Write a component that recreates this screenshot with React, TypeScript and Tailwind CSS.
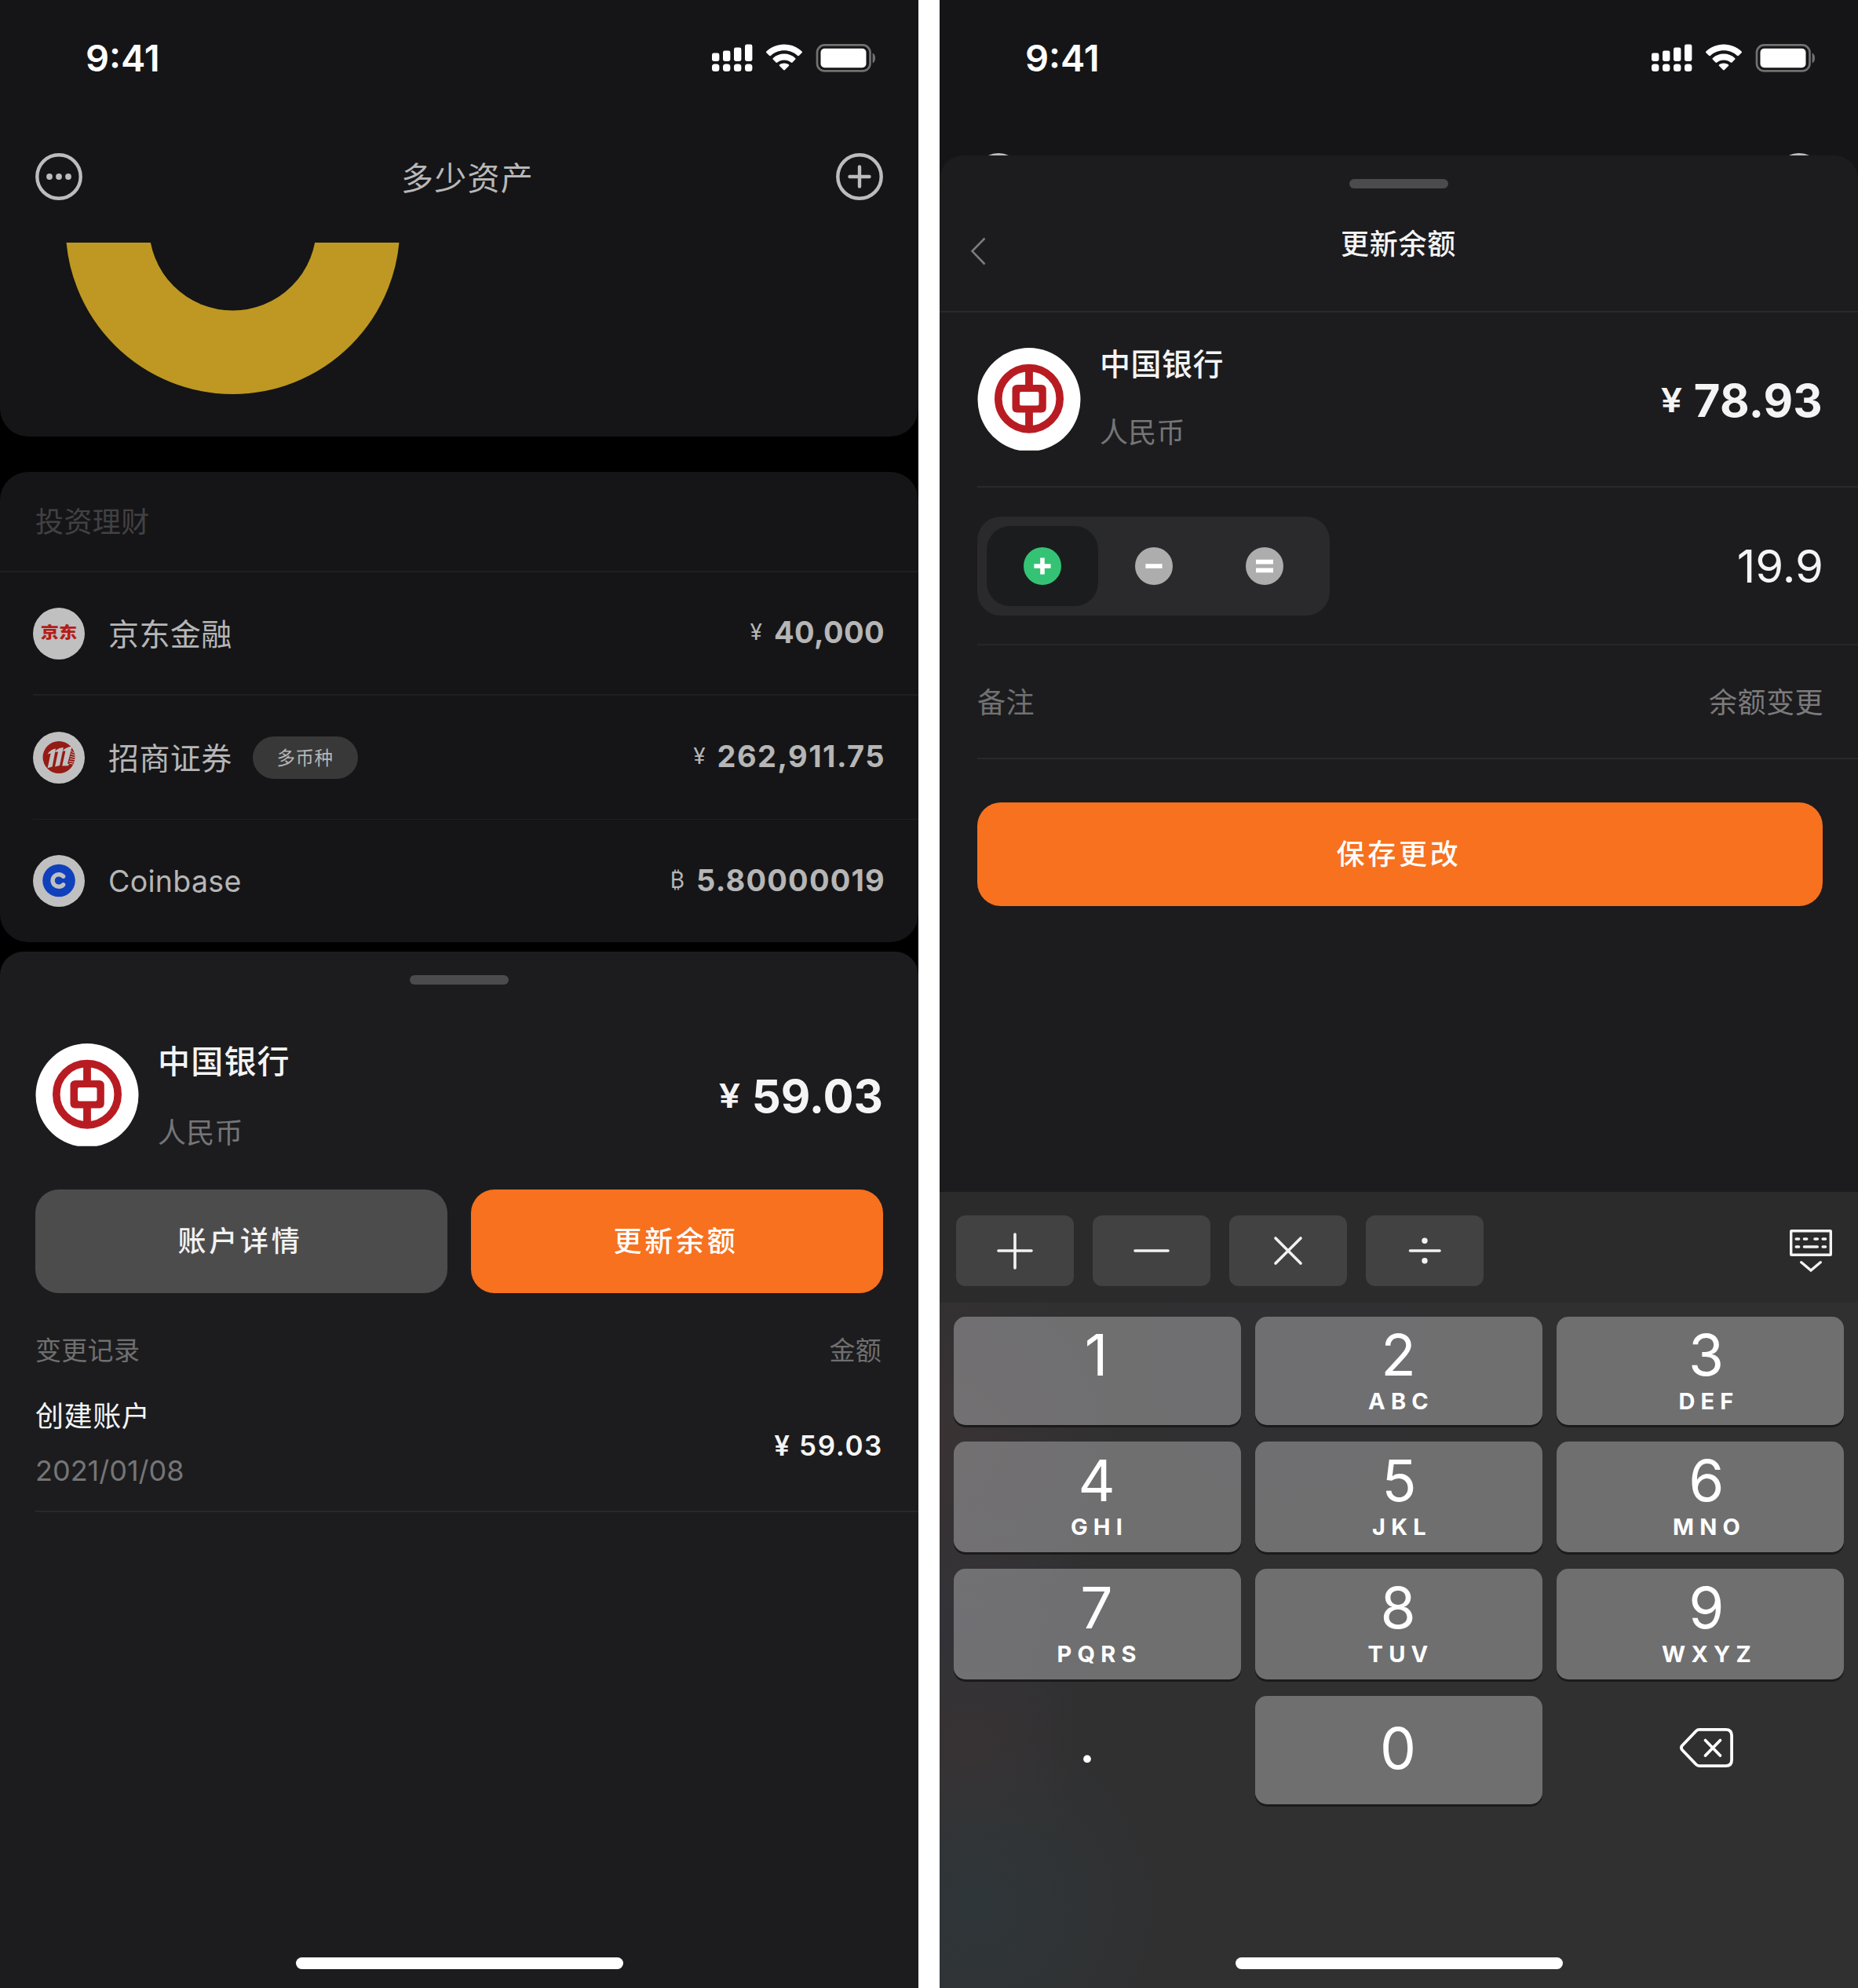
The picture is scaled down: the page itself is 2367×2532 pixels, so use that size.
import React from 'react';

const CJK = "font-['Noto_Sans_CJK_SC','Noto_Sans',sans-serif]";
const LATIN = 'font-[Inter,sans-serif]';

function StatusBar() {
  return (
    <div className="flex h-[147px] shrink-0 items-center justify-between pl-[109px] pr-[55px]">
      <span className={`${LATIN} text-[47px] font-semibold leading-[60px] text-white`}>9:41</span>
      <svg width="208" height="36" viewBox="0 0 208 36" className="mt-px" fill="#fff">
        <rect x="0" y="11.5" width="9.4" height="10.5" rx="2.4" />
        <rect x="14" y="8.5" width="9.4" height="13.5" rx="2.4" />
        <rect x="28" y="4.5" width="9.4" height="17.5" rx="2.4" />
        <rect x="42" y="0.5" width="9.4" height="21.5" rx="2.4" />
        <rect x="0" y="25.5" width="9.4" height="9.6" rx="3.6" />
        <rect x="14" y="25.5" width="9.4" height="9.6" rx="3.6" />
        <rect x="28" y="25.5" width="9.4" height="9.6" rx="3.6" />
        <rect x="42" y="25.5" width="9.4" height="9.6" rx="3.6" />
        <path d="M92 0.5 C101 0.5 108.800 4 114.600 9.400 C115.200 10 115.200 10.600 114.600 11.200 L111 14.800 C110.400 15.400 109.800 15.400 109.200 14.900 C104.500 10.600 98.600 8.200 92 8.200 C85.400 8.200 79.500 10.600 74.800 14.900 C74.200 15.400 73.600 15.400 73 14.800 L69.400 11.200 C68.800 10.600 68.800 10 69.400 9.400 C75.200 4 83 0.500 92 0.500 Z" />
        <path d="M92 12.600 C97.400 12.600 102.300 14.600 106.100 18 C106.700 18.600 106.700 19.200 106.100 19.800 L102.500 23.400 C101.900 24 101.300 24 100.700 23.500 C98.300 21.500 95.300 20.400 92 20.400 C88.700 20.400 85.700 21.500 83.300 23.500 C82.700 24 82.100 24 81.500 23.400 L77.900 19.800 C77.300 19.200 77.300 18.600 77.900 18 C81.700 14.600 86.600 12.600 92 12.600 Z" />
        <path d="M92 24.400 C94.200 24.400 96.200 25.100 97.800 26.300 C98.500 26.900 98.500 27.500 97.900 28.100 L92.900 33.100 C92.300 33.700 91.700 33.700 91.100 33.100 L86.100 28.100 C85.500 27.500 85.500 26.900 86.200 26.300 C87.800 25.100 89.800 24.400 92 24.400 Z" />
        <rect x="134" y="1.4" width="67.500" height="33" rx="9.500" fill="none" stroke="#717172" strokeWidth="2.700" />
        <rect x="138.500" y="5.700" width="58" height="24.500" rx="5" />
        <path d="M204.600 11.500 C207 12.500 208 15 208 18 C208 21 207 23.500 204.600 24.500 Z" fill="#717172" />
      </svg>
    </div>
  );
}

function MoreIcon() {
  return (
    <svg width="60" height="60" viewBox="0 0 60 60" className="shrink-0">
      <circle cx="30" cy="30" r="27.700" fill="none" stroke="#bcbcbc" strokeWidth="4.400" />
      <circle cx="18" cy="30" r="3.900" fill="#bcbcbc" />
      <circle cx="30" cy="30" r="3.900" fill="#bcbcbc" />
      <circle cx="42" cy="30" r="3.900" fill="#bcbcbc" />
    </svg>
  );
}

function AddIcon() {
  return (
    <svg width="60" height="60" viewBox="0 0 60 60" className="shrink-0">
      <circle cx="30" cy="30" r="27.700" fill="none" stroke="#bcbcbc" strokeWidth="4.400" />
      <path d="M30 17.500 V42.500 M17.500 30 H42.500" stroke="#bcbcbc" strokeWidth="4.400" strokeLinecap="round" />
    </svg>
  );
}

function JdLogo() {
  return (
    <div className="flex size-[66px] shrink-0 items-center justify-center rounded-full bg-[#c0c0c0]">
      <span className={`${CJK} -mt-[4px] scale-x-[1.16] whitespace-nowrap text-[20px] font-black leading-[24px] text-[#b31d18]`}>京东</span>
    </div>
  );
}

function CmsLogo() {
  return (
    <svg width="66" height="66" viewBox="0 0 66 66" className="shrink-0">
      <circle cx="33" cy="33" r="33" fill="#c0c0c0" />
      <circle cx="33" cy="32.500" r="20.500" fill="#951b15" />
      <g fill="#c0c0c0">
        <path d="M18.400 28.500 C21 24.500 24.500 22.300 29 21.500 L24.600 44.600 L18.600 46.200 L22.600 27.600 Z" />
        <path d="M27.400 25.800 C30.500 22 34 20.400 38.800 20 L34 43 L28 44.400 L32 25.600 Z" />
        <path d="M37.400 24.500 C40.500 20.800 44.500 19 49.800 18.400 L44.200 40.300 C44.600 41.600 45.600 41.400 46.800 40.400 L44.800 43.200 L37.200 43.600 L41.400 24.600 Z" />
      </g>
      <path d="M48.500 24.500 L52 27 M48 28 L53.200 30 M47.500 31.500 L53.500 32.800 M47 34.500 L53.300 35.600 M46 37.500 L52.400 38.600 M46.500 40.200 L51 41" stroke="#c0c0c0" strokeWidth="1" />
    </svg>
  );
}

function CoinbaseLogo() {
  return (
    <svg width="66" height="66" viewBox="0 0 66 66" className="shrink-0">
      <circle cx="33" cy="33" r="33" fill="#c0c0c0" />
      <circle cx="33" cy="32.500" r="20.800" fill="#1040bc" />
      <path d="M38.600 27.200 A7.800 7.800 0 1 0 38.600 37.800" fill="none" stroke="#c0c0c0" strokeWidth="5.400" strokeLinecap="round" />
    </svg>
  );
}

function BankOfChinaLogo() {
  return (
    <svg width="132" height="132" viewBox="0 0 132 132" className="shrink-0">
      <path d="M66 0 A66 66 0 0 1 78 130.800 H54 A66 66 0 0 1 66 0 Z" fill="#fff" />
      <circle cx="66" cy="64.700" r="39.200" fill="none" stroke="#b81c22" strokeWidth="9.600" />
      <path d="M66 25 V50 M66 80 V104" stroke="#b81c22" strokeWidth="9.800" />
      <path fillRule="evenodd" fill="#b81c22" d="M51 47 H81.500 Q87.800 47 87.800 53.500 V76 Q87.800 82.500 81.500 82.500 H51 Q44.500 82.500 44.500 76 V53.500 Q44.500 47 51 47 Z M56 56 Q54 56 54 58 V71.500 Q54 73.500 56 73.500 H76.500 Q78.500 73.500 78.500 71.500 V58 Q78.500 56 76.500 56 Z" />
    </svg>
  );
}

function ListAmount({ symbol, value, tracking }: { symbol: string; value: string; tracking: string }) {
  return (
    <div className={`${LATIN} -mt-[3px] flex items-center gap-[15px] text-[#b6b6b6]`}>
      <span className="text-[28px] leading-[40px]">{symbol}</span>
      <span className={`text-[38px] font-bold leading-[40px] ${tracking}`}>{value}</span>
    </div>
  );
}

function BigAmount({ value, tracking, offset }: { value: string; tracking: string; offset: string }) {
  return (
    <div className={`${LATIN} ${offset} flex items-center gap-[15px] text-[#f4f4f4]`}>
      <span className="-mt-[2px] inline-block origin-right scale-x-[1.13] text-[43px] font-semibold leading-[60px]">¥</span>
      <span className={`text-[58px] font-bold leading-[60px] ${tracking}`}>{value}</span>
    </div>
  );
}

function HomeIndicator() {
  return <div className="absolute bottom-[24px] left-[377px] h-[15px] w-[417px] rounded-full bg-white" />;
}

function AssetsScreen() {
  return (
    <div className="relative flex h-[2532px] w-[1170px] flex-col overflow-hidden bg-black">
      <div className="flex h-[556px] shrink-0 flex-col rounded-b-[36px] bg-[#151517]">
        <StatusBar />
        <div className="flex h-[156px] items-center justify-between px-[45px]">
          <MoreIcon />
          <span className={`${CJK} -mt-[3px] ml-[21px] text-[41px] leading-[50px] tracking-[1.2px] text-[#b8b8b8]`}>多少资产</span>
          <AddIcon />
        </div>
        <svg width="1170" height="247" viewBox="0 0 1170 247" className="mt-[6px] shrink-0 overflow-hidden">
          <circle cx="296.500" cy="-20" r="159.700" fill="none" stroke="#be9822" strokeWidth="106.400" />
        </svg>
      </div>

      <div className="mt-[45px] flex h-[599px] shrink-0 flex-col rounded-[36px] bg-[#151517]">
        <div className={`${CJK} h-[128px] border-b-2 border-[#1f1f20] pl-[45px] text-[36px] leading-[122px] tracking-[0.4px] text-[#414142]`}>投资理财</div>
        <div className="ml-[42px] flex h-[157px] items-center border-b-2 border-[#1f1f20] pr-[43px]">
          <JdLogo />
          <span className={`${CJK} -mt-[4px] ml-[30px] flex-1 text-[39px] leading-[50px] tracking-[0.4px] text-[#b6b6b6]`}>京东金融</span>
          <ListAmount symbol="¥" value="40,000" tracking="tracking-[0.4px]" />
        </div>
        <div className="ml-[42px] flex h-[158px] items-center border-b border-[#202021] pr-[42px]">
          <CmsLogo />
          <span className={`${CJK} -mt-[4px] ml-[30px] text-[39px] leading-[50px] tracking-[0.4px] text-[#b6b6b6]`}>招商证券</span>
          <div className="ml-[26px] flex h-[54px] w-[134px] items-center justify-center rounded-full bg-[#383838]">
            <span className={`${CJK} -mt-[1px] text-[23.5px] leading-[30px] tracking-[0.5px] text-[#b6b6b6]`}>多币种</span>
          </div>
          <div className="flex-1" />
          <ListAmount symbol="¥" value="262,911.75" tracking="tracking-[1.45px]" />
        </div>
        <div className="ml-[42px] flex h-[156px] items-center pr-[42px]">
          <CoinbaseLogo />
          <span className={`${LATIN} ml-[30px] mt-[2px] flex-1 text-[37.5px] leading-[50px] tracking-[0.3px] text-[#b6b6b6]`}>Coinbase</span>
          <ListAmount symbol="₿" value="5.80000019" tracking="tracking-[1.2px]" />
        </div>
      </div>

      <div className="mt-[12px] flex flex-1 flex-col rounded-t-[30px] bg-[#1c1c1e] pt-[30px]">
        <div className="h-[12px] w-[126px] self-center rounded-full bg-[#4b4b4d]" />
        <div className="mt-[75px] flex h-[132px] items-center px-[45px]">
          <BankOfChinaLogo />
          <div className={`${CJK} ml-[24px] flex h-[132px] flex-1 flex-col`}>
            <span className="text-[41px] font-medium leading-[40px] tracking-[1.2px] text-[#f4f4f4]">中国银行</span>
            <span className="mt-[51px] text-[36px] leading-[40px] tracking-[0.2px] text-[#757576]">人民币</span>
          </div>
          <BigAmount value="59.03" tracking="tracking-normal" offset="mt-px" />
        </div>
        <div className={`${CJK} mt-[54px] grid h-[132px] grid-cols-2 gap-[30px] px-[45px] text-[36px] font-medium tracking-[3.8px]`}>
          <button className="rounded-[30px] bg-[#4c4c4d] pb-[6px] pr-[3px] text-[#f2f2f2]">账户详情</button>
          <button className="rounded-[30px] bg-[#f7711f] pb-[6px] pr-[3px] text-white">更新余额</button>
        </div>
        <div className={`${CJK} mt-[51px] flex justify-between pl-[45px] pr-[47px] text-[33px] leading-[40px] tracking-[0.3px] text-[#6f6f70]`}>
          <span>变更记录</span>
          <span>金额</span>
        </div>
        <div className="ml-[45px] mt-[43px] flex items-center justify-between border-b-2 border-[#29292b] pb-[31px] pr-[45px]">
          <div className="flex flex-col">
            <span className={`${CJK} text-[36px] leading-[40px] tracking-[0.6px] text-[#f4f4f4]`}>创建账户</span>
            <span className={`${LATIN} mt-[32px] text-[36px] leading-[40px] text-[#757576]`}>2021/01/08</span>
          </div>
          <span className={`${LATIN} mt-[7px] text-[35px] font-semibold leading-[40px] tracking-[1.6px] text-[#f4f4f4]`}>¥ 59.03</span>
        </div>
      </div>
      <HomeIndicator />
    </div>
  );
}

function ModeSwitch() {
  return (
    <div className="flex h-[126px] w-[449px] items-center rounded-[30px] bg-[#2a2a2c] pl-[12px]">
      <div className="flex h-[102px] w-[142px] items-center justify-center rounded-[30px] bg-[#1b1c1d]">
        <svg width="48" height="48" viewBox="0 0 48 48">
          <circle cx="24" cy="24" r="24" fill="#34c375" />
          <path d="M24 13.400 V34.600 M13.400 24 H34.600" stroke="#fff" strokeWidth="5.600" />
        </svg>
      </div>
      <div className="flex w-[141px] justify-center">
        <svg width="48" height="48" viewBox="0 0 48 48">
          <circle cx="24" cy="24" r="24" fill="#adadad" />
          <path d="M13.400 24 H34.600" stroke="#fff" strokeWidth="5.600" />
        </svg>
      </div>
      <div className="flex w-[141px] justify-center">
        <svg width="48" height="48" viewBox="0 0 48 48">
          <circle cx="24" cy="24" r="24" fill="#adadad" />
          <path d="M13 18.600 H35 M13 29.400 H35" stroke="#fff" strokeWidth="5.600" />
        </svg>
      </div>
    </div>
  );
}

const OPERATORS = [
  <path key="plus" d="M75 24 V67 M54 45 H96" />,
  <path key="minus" d="M54 45 H96" />,
  <path key="times" d="M59 29 L91 61 M91 29 L59 61" />,
  <g key="divide">
    <path d="M56.500 45 H94" />
    <circle cx="75" cy="32.300" r="3.700" fill="#f2f2f2" stroke="none" />
    <circle cx="75" cy="57.700" r="3.700" fill="#f2f2f2" stroke="none" />
  </g>,
];

const KEYS: { digit: string; letters: string; height: string; shift: string }[] = [
  { digit: '1', letters: '', height: 'h-[138px]', shift: 'pr-[3px]' },
  { digit: '2', letters: 'ABC', height: 'h-[138px]', shift: 'pr-px' },
  { digit: '3', letters: 'DEF', height: 'h-[138px]', shift: 'pl-[15px]' },
  { digit: '4', letters: 'GHI', height: 'h-[141px]', shift: 'pr-[2px]' },
  { digit: '5', letters: 'JKL', height: 'h-[141px]', shift: 'pl-px' },
  { digit: '6', letters: 'MNO', height: 'h-[141px]', shift: 'pl-[16px]' },
  { digit: '7', letters: 'PQRS', height: 'h-[141px]', shift: 'pr-[2px]' },
  { digit: '8', letters: 'TUV', height: 'h-[141px]', shift: 'pr-[2px]' },
  { digit: '9', letters: 'WXYZ', height: 'h-[141px]', shift: 'pl-[16px]' },
];

function Keyboard() {
  return (
    <div className="mt-auto h-[1014px] bg-[#303031]">
      <div className="flex h-[141px] items-start gap-[24px] bg-[#2b2b2b] pl-[21px] pt-[30px]">
        {OPERATORS.map((glyph, i) => (
          <div key={i} className="rounded-[12px] bg-[#424242]">
            <svg width="150" height="90" viewBox="0 0 150 90" fill="none" stroke="#f2f2f2" strokeWidth="3.600" strokeLinecap="round">
              {glyph}
            </svg>
          </div>
        ))}
        <svg width="54" height="54" viewBox="0 0 54 54" className="ml-auto mr-[33px] mt-[18px]" fill="none" stroke="#f2f2f2" strokeLinecap="round">
          <rect x="1.700" y="1.700" width="50.600" height="30.600" rx="0.500" strokeWidth="3.400" />
          <path d="M8.300 12 H11.600 M18.500 12 H21.700 M32 12 H35.300 M42.200 12 H45.500 M8.300 22 H11.600 M18.500 22 H35.300 M42.200 22 H45.500" strokeWidth="3.600" />
          <path d="M14.800 41.700 L27 52 L39.200 41.700" strokeWidth="3.400" />
        </svg>
      </div>
      <div className="grid h-[873px] grid-cols-3 content-start gap-x-[18px] gap-y-[21px] bg-[radial-gradient(circle_at_4%_88%,rgba(47,56,59,0.8)_0px,rgba(47,56,59,0)_230px),radial-gradient(circle_at_0%_20%,rgba(62,52,54,0.65)_0px,rgba(62,52,54,0)_240px),radial-gradient(circle_at_3%_67%,rgba(62,52,54,0.65)_0px,rgba(62,52,54,0)_150px),radial-gradient(circle_at_3%_46%,rgba(52,52,58,0.8)_0px,rgba(52,52,58,0)_180px),radial-gradient(circle_at_38%_8%,rgba(48,48,54,0.6)_0px,rgba(48,48,54,0)_200px)] px-[18px] pt-[18px]">
        {KEYS.map((k) => (
          <div key={k.digit} className={`${LATIN} ${k.height} ${k.shift} flex flex-col items-center justify-center rounded-[15px] bg-[#aeaeaf]/50 pt-[3px] text-white shadow-[0_3px_0_#1b1b1b]`}>
            <span className="text-[73px] leading-[60px]">{k.digit}</span>
            <span className="mt-[14px] h-[30px] pl-[7px] text-[29px] font-[650] leading-[30px] tracking-[7.2px]">{k.letters}</span>
          </div>
        ))}
        <div className={`${LATIN} flex h-[138px] items-center justify-center pb-[21px] pr-[26px] text-[73px] leading-[60px] text-white`}>.</div>
        <div className={`${LATIN} flex h-[138px] items-center justify-center rounded-[15px] bg-[#aeaeaf]/50 pb-[4px] pr-[2px] text-[73px] leading-[60px] text-white shadow-[0_3px_0_#1b1b1b]`}>0</div>
        <div className="flex h-[138px] items-center justify-center pb-[6px] pl-[16px]">
          <svg width="68" height="50" viewBox="0 0 68 50" fill="none" stroke="#fff" strokeWidth="3.800" strokeLinecap="round" strokeLinejoin="round">
            <path d="M25 1.900 H58.500 Q66.100 1.900 66.100 9.500 V40.500 Q66.100 48.100 58.500 48.100 H25 Q22.500 48.100 20.700 46.200 L3 27.700 Q0.800 25 3 22.300 L20.700 3.800 Q22.500 1.900 25 1.900 Z" />
            <path d="M32.500 15.500 L51.500 35 M51.500 15.500 L32.500 35" />
          </svg>
        </div>
      </div>
    </div>
  );
}

function UpdateBalanceScreen() {
  return (
    <div className="relative flex h-[2532px] w-[1170px] flex-col overflow-hidden bg-[#151517]">
      <StatusBar />
      <div className="flex h-[51px] shrink-0 items-start justify-between overflow-hidden px-[45px] pt-[48px]">
        <MoreIcon />
        <AddIcon />
      </div>
      <div className="flex flex-1 flex-col rounded-t-[30px] bg-[#1c1c1e] pt-[30px]">
        <div className="h-[12px] w-[126px] shrink-0 self-center rounded-full bg-[#4b4b4d]" />
        <div className="flex h-[158px] items-start justify-between border-b-2 border-[#29292b] px-[39px]">
          <svg width="20" height="36" viewBox="0 0 20 36" className="mt-[62px]" fill="none" stroke="#7b7b7c" strokeWidth="2.600">
            <path d="M18.500 1.500 L2.500 17.800 L18.500 34.500" />
          </svg>
          <span className={`${CJK} mt-[48px] text-[36px] font-medium leading-[40px] tracking-[0.7px] text-[#f4f4f4]`}>更新余额</span>
          <div className="w-[21px]" />
        </div>
        <div className="ml-[48px] flex h-[223px] items-center border-b-2 border-[#29292b] pr-[45px]">
          <BankOfChinaLogo />
          <div className={`${CJK} ml-[24px] flex h-[132px] flex-1 flex-col`}>
            <span className="-mt-[2px] text-[39px] font-medium leading-[40px] tracking-[0.5px] text-[#f4f4f4]">中国银行</span>
            <span className="mt-[47px] text-[36px] leading-[40px] tracking-[0.2px] text-[#757576]">人民币</span>
          </div>
          <BigAmount value="78.93" tracking="tracking-[0.2px]" offset="mt-[3px]" />
        </div>
        <div className="ml-[48px] flex h-[201px] items-center justify-between border-b-2 border-[#262628] pr-[44px]">
          <ModeSwitch />
          <span className={`${LATIN} mt-[1px] text-[58px] leading-[60px] text-[#f4f4f4]`}>19.9</span>
        </div>
        <div className={`${CJK} ml-[48px] flex h-[145px] items-center justify-between border-b-2 border-[#29292b] pb-[4px] pr-[44px] text-[36px] leading-[40px] tracking-[0.5px]`}>
          <span className="text-[#717172]">备注</span>
          <span className="text-[#7b7b7c]">余额变更</span>
        </div>
        <button className={`${CJK} ml-[48px] mr-[45px] mt-[55px] h-[132px] rounded-[30px] bg-[#f7711f] pb-[6px] pr-[3px] text-[36px] font-medium tracking-[3.8px] text-white`}>保存更改</button>
        <Keyboard />
      </div>
      <HomeIndicator />
    </div>
  );
}

export default function App() {
  return (
    <div className="flex w-[2367px] justify-between bg-white">
      <AssetsScreen />
      <UpdateBalanceScreen />
    </div>
  );
}
